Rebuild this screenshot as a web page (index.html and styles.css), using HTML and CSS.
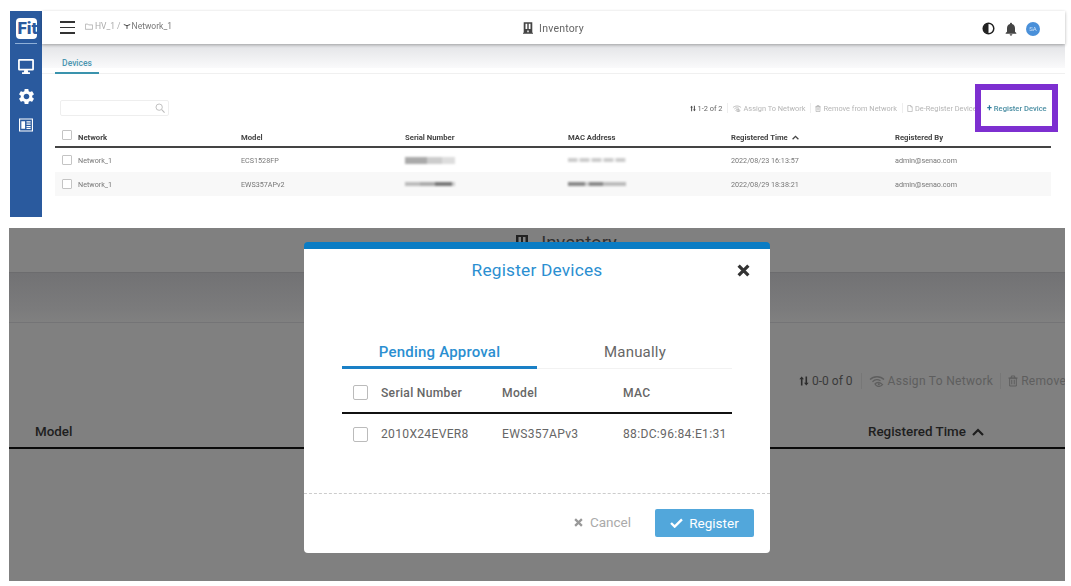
FILE: index.html
```html
<!DOCTYPE html>
<html>
	<head>
		<meta charset="utf-8">
		<title>Inventory</title>
		<link rel="stylesheet" href="styles.css">
	</head>
	<body>
		<svg class="defs" width="0" height="0">
			<symbol id="i-building" viewBox="0 0 14 16"><path fill-rule="evenodd" d="M1 0h12v14.500h1V16H0v-1.500h1zM3.500 2v7.500h2.500V2zM8 2v7.500h2.500V2zM6 11.500v2.500h2v-2.500z"/></symbol>
			<symbol id="i-sort" viewBox="0 0 12 12"><path d="M3.200 .5L6 4H4.200v7.500H2.300V4H.4zM8.800 11.500L6 8h1.800V.5h1.900V8h1.900z"/></symbol>
			<symbol id="i-wifi" viewBox="0 0 16 12"><g fill="none" stroke="currentColor" stroke-width="1.300"><path d="M1 4.500C4.500 .8 11.500 .8 15 4.500"/><path d="M3.500 6.800C5.800 4.500 9 4.300 11.500 5.800"/><path d="M6 9c1.500-2 5-2.200 7.500 .6-2.500 2.600-6 2.400-7.500-.6z"/></g><circle cx="9.800" cy="9.300" r="1" fill="currentColor"/></symbol>
			<symbol id="i-trash" viewBox="0 0 12 14"><path fill="none" stroke="currentColor" stroke-width="1.200" d="M2 3.500h8V13H2zM.5 3.500h11M4 3.500V1h4v2.500M4.500 5.500v5.500M7.500 5.500v5.500"/></symbol>
			<symbol id="i-doc" viewBox="0 0 12 14"><path fill="none" stroke="currentColor" stroke-width="1.200" d="M1.500 1h6l3 3v9h-9zM7.500 1v3h3"/></symbol>
			<symbol id="i-up" viewBox="0 0 12 8"><path fill="none" stroke="currentColor" stroke-width="2.200" d="M1 7l5-5 5 5"/></symbol>
			<symbol id="i-cross" viewBox="0 0 12 12"><path fill="none" stroke="currentColor" stroke-width="3" d="M1.500 1.500l9 9M10.500 1.500l-9 9"/></symbol>
		</svg>

		<!-- inventory page -->
		<section class="page">
			<nav class="side">
				<div class="logo-wrap"><div class="logo">Fit</div></div>
				<svg class="side-icon monitor" viewBox="0 0 18 17"><path fill="#fff" fill-rule="evenodd" d="M1.500 0h15A1.500 1.500 0 0 1 18 1.500v10a1.500 1.500 0 0 1-1.500 1.500H11l.5 2h2v2h-9v-2h2L7 13H1.500A1.500 1.500 0 0 1 0 11.500v-10A1.500 1.500 0 0 1 1.500 0zM2 2v9h14V2z"/></svg>
				<svg class="side-icon gear" viewBox="0 0 24 24"><path fill="#fff" d="M19.140 12.940c.04-.3.06-.61.06-.94 0-.32-.02-.64-.07-.94l2.030-1.580a.49.49 0 0 0 .12-.61l-1.920-3.320a.488.488 0 0 0-.59-.22l-2.390.96c-.5-.38-1.030-.7-1.620-.94l-.36-2.540a.484.484 0 0 0-.48-.41h-3.840c-.24 0-.43.17-.47.41l-.36 2.540c-.59.24-1.130.57-1.620.94l-2.390-.96c-.22-.08-.47 0-.59.22L2.740 8.870c-.12.21-.08.47.12.61l2.030 1.580c-.05.3-.09.63-.09.94s.02.64.07.94l-2.030 1.580a.49.49 0 0 0-.12.61l1.920 3.320c.12.22.37.29.59.22l2.390-.96c.5.38 1.030.7 1.620.94l.36 2.540c.05.24.24.41.48.41h3.840c.24 0 .44-.17.47-.41l.36-2.540c.59-.24 1.130-.56 1.620-.94l2.390.96c.22.08.47 0 .59-.22l1.920-3.320c.12-.22.07-.47-.12-.61l-2.010-1.580zM12 15.600c-1.980 0-3.600-1.620-3.600-3.600s1.620-3.600 3.600-3.600 3.600 1.620 3.600 3.600-1.620 3.600-3.600 3.600z"/></svg>
				<svg class="side-icon news" viewBox="0 0 15 14"><path fill="none" stroke="#fff" stroke-width="1.200" d="M.6 .6h13.800v12.800H.6z"/><path fill="#fff" d="M2.500 3h4v8h-4zM8 3h4.500v1.200H8zM8 5.500h4.500v1.200H8zM8 8h4.500v1.200H8zM8 10h4.500v1.200H8z"/></svg>
			</nav>
			<div class="main">
				<header class="topbar">
					<div class="top-left">
						<div class="burger"><i></i><i></i><i></i></div>
						<div class="crumbs">
							<svg class="crumb-icon" viewBox="0 0 10 8"><path fill="none" stroke="#aaa" d="M.5 1h3l1 1h5v5.500h-9z"/></svg>
							<span>HV_1</span> <span>/</span>
							<svg class="crumb-icon dark" viewBox="0 0 10 8"><path fill="none" stroke="#444" stroke-width="1.200" d="M1 1.500l4 1.500 4-1.500M5 3v4"/></svg><span class="crumb-dark">Network_1</span>
						</div>
					</div>
					<div class="top-title">
						<svg class="title-icon"><use href="#i-building"/></svg>
						<span>Inventory</span>
					</div>
					<div class="top-right">
						<svg class="top-icon" viewBox="0 0 14 14"><circle cx="7" cy="7" r="5.700" fill="#fff" stroke="#222" stroke-width="1.600"/><path fill="#222" d="M7 1.500a5.500 5.500 0 0 0 0 11z"/></svg>
						<svg class="top-icon bell" viewBox="0 0 24 24"><path fill="#444" d="M12 22c1.100 0 2-.9 2-2h-4c0 1.100.89 2 2 2zm6-6v-5c0-3.070-1.640-5.640-4.500-6.320V4c0-.83-.67-1.500-1.500-1.500s-1.500.67-1.500 1.500v.68C7.630 5.360 6 7.920 6 11v5l-2 2v1h16v-1l-2-2z"/></svg>
						<div class="avatar">SA</div>
					</div>
				</header>
				<div class="tabs"><div class="tab">Devices</div></div>
				<div class="content">
					<div class="toolbar">
						<div class="search">
							<svg class="search-icon" viewBox="0 0 12 12"><circle cx="5" cy="5" r="3.800" fill="none" stroke="#bbb" stroke-width="1.100"/><path stroke="#bbb" stroke-width="1.300" d="M8 8l3.500 3.500"/></svg>
						</div>
						<div class="actions">
							<span class="count"><svg class="act-icon"><use href="#i-sort"/></svg>1-2 of 2</span>
							<span class="act"><svg class="act-icon wide"><use href="#i-wifi"/></svg>Assign To Network</span>
							<span class="act"><svg class="act-icon"><use href="#i-trash"/></svg>Remove from Network</span>
							<span class="act act-last"><svg class="act-icon"><use href="#i-doc"/></svg>De-Register Device</span>
							<span class="register">
								<b>+</b> Register Device
								<span class="highlight"></span>
							</span>
						</div>
					</div>
					<div class="row head">
						<div class="cell-check"><span class="check"></span></div>
						<div>Network</div><div>Model</div><div>Serial Number</div><div>MAC Address</div>
						<div class="sorted">Registered Time <svg class="up"><use href="#i-up"/></svg></div>
						<div>Registered By</div>
					</div>
					<div class="row">
						<div class="cell-check"><span class="check"></span></div>
						<div>Network_1</div><div>ECS1528FP</div>
						<div><span class="mask mask-serial"></span></div>
						<div><span class="mask mask-mac"></span></div>
						<div>2022/08/23 16:13:57</div><div>admin@senao.com</div>
					</div>
					<div class="row stripe">
						<div class="cell-check"><span class="check"></span></div>
						<div>Network_1</div><div>EWS357APv2</div>
						<div><span class="mask mask-serial dark"></span></div>
						<div><span class="mask mask-mac dark"></span></div>
						<div>2022/08/29 18:38:21</div><div>admin@senao.com</div>
					</div>
				</div>
			</div>
		</section>

		<!-- same page zoomed in, dialog open -->
		<section class="dimmed">
			<div class="dim-head">
				<svg class="dim-building"><use href="#i-building"/></svg>
				<span>Inventory</span>
			</div>
			<div class="dim-band"></div>
			<div class="dim-tools">
				<span class="dim-count"><svg class="dim-icon"><use href="#i-sort"/></svg>0-0 of 0</span>
				<span class="dim-act"><svg class="dim-icon wide"><use href="#i-wifi"/></svg>Assign To Network</span>
				<span class="dim-act"><svg class="dim-icon"><use href="#i-trash"/></svg>Remove from Network</span>
			</div>
			<div class="dim-table">
				<div>Model</div>
				<div>Registered Time <svg class="dim-up"><use href="#i-up"/></svg></div>
			</div>

			<div class="modal">
				<div class="modal-head">
					<span></span>
					<h2>Register Devices</h2>
					<svg class="close"><use href="#i-cross"/></svg>
				</div>
				<div class="modal-tabs">
					<div class="modal-tab active">Pending Approval</div>
					<div class="modal-tab">Manually</div>
				</div>
				<div class="m-row m-head">
					<span class="m-check"></span><div>Serial Number</div><div>Model</div><div>MAC</div>
				</div>
				<div class="m-row">
					<span class="m-check"></span><div>2010X24EVER8</div><div>EWS357APv3</div><div>88:DC:96:84:E1:31</div>
				</div>
				<div class="modal-foot">
					<span class="cancel"><svg class="cancel-x"><use href="#i-cross"/></svg>Cancel</span>
					<span class="submit">
						<svg class="tick" viewBox="0 0 14 11"><path fill="none" stroke="#fff" stroke-width="2.600" d="M1 5.500l4 4 8-8"/></svg>
						Register
					</span>
				</div>
			</div>
		</section>
	</body>
</html>
```
FILE: styles.css
```css
html {
  box-sizing: border-box;
  font-family: 'Roboto', 'Liberation Sans', sans-serif;
}

*, *:before, *:after {
  box-sizing: inherit;
}

body {
  margin: 0;
  padding: 11px 6px 0 10px;
  background: #fff;
  height: 586px;
  overflow: hidden;
}

.defs {
  position: absolute;
}

/* top part */
.page {
  display: flex;
  height: 206px;
  margin-bottom: 11px;
  filter: blur(.35px);
}

.side {
  width: 32px;
  background: #2a5a9e;
  display: flex;
  flex-direction: column;
  align-items: center;
}

.logo-wrap {
  width: 22px;
  height: 33px;
  padding-top: 7px;
  border-bottom: 1px solid #8fb0d8;
  display: flex;
  justify-content: center;
}

.logo {
  width: 21px;
  height: 21px;
  background: #fff;
  border-radius: 4px;
  color: #2a5a9e;
  font-size: 17px;
  font-weight: 900;
  line-height: 21px;
  padding-left: 2px;
  white-space: nowrap;
  overflow: hidden;
}

.side-icon {
  width: 16px;
  height: 15px;
  margin-top: 15px;
}

.side-icon.gear {
  width: 19px;
  height: 19px;
  margin-top: 13px;
}

.side-icon.news {
  width: 14px;
  height: 14px;
  margin-top: 12px;
}

.main {
  flex: 1;
  min-width: 0;
}

.topbar {
  height: 33px;
  display: grid;
  grid-template-columns: 1fr auto 1fr;
  align-items: center;
  background: #fff;
  box-shadow: 0 1px 3px rgba(0,0,0,.3);
  position: relative;
}

.top-left {
  display: flex;
  align-items: center;
  padding-left: 18px;
}

.burger {
  width: 15px;
  margin-right: 10px;
}

.burger i {
  display: block;
  height: 1.5px;
  background: #333;
  margin-bottom: 4px;
}

.burger i:last-child {
  margin-bottom: 0;
}

.crumbs {
  display: flex;
  align-items: center;
  gap: 2px;
  font-size: 8.500px;
  color: #aaa;
  margin-top: -3px;
}

.crumb-icon {
  width: 8px;
  height: 7px;
}

.crumb-dark {
  color: #777;
  margin-left: -1px;
}

.top-title {
  display: flex;
  align-items: center;
  gap: 6px;
  font-size: 10.500px;
  color: #666;
  letter-spacing: .2px;
  margin-top: 1px;
}

.title-icon {
  width: 10px;
  height: 12px;
  fill: #444;
}

.top-right {
  display: flex;
  justify-content: flex-end;
  align-items: center;
  padding-right: 25px;
  margin-top: 2px;
}

.top-icon {
  width: 13px;
  height: 13px;
  margin-right: 8px;
}

.top-icon.bell {
  width: 16px;
  height: 16px;
  margin-right: 7px;
}

.avatar {
  width: 14px;
  height: 14px;
  border-radius: 50%;
  background: #4a90d9;
  color: #cfe2f6;
  font-size: 6px;
  line-height: 14px;
  text-align: center;
}

.tabs {
  height: 30px;
  background: linear-gradient(#e2e3e6, #fafafb 24px, #fff 24px);
  border-bottom: 1px solid #f0f0f0;
  padding-left: 13px;
}

.tab {
  width: 44px;
  height: 30px;
  border-bottom: 2px solid #3a93ad;
  color: #4a95b0;
  font-size: 8.500px;
  font-weight: 500;
  text-align: center;
  padding-top: 14px;
}

.content {
  padding: 0 14px 0 13px;
}

.toolbar {
  display: flex;
  justify-content: space-between;
  align-items: center;
  height: 53px;
  padding: 15px 4px 0 5px;
}

.search {
  width: 109px;
  height: 16px;
  border: 1px solid #eee;
  border-radius: 2px;
  display: flex;
  justify-content: flex-end;
  align-items: center;
  padding-right: 3px;
}

.search-icon {
  width: 10px;
  height: 10px;
}

.actions {
  display: flex;
  align-items: center;
  font-size: 7.400px;
  color: #b5b5b5;
  white-space: nowrap;
}

.count {
  color: #666;
  display: flex;
  align-items: center;
  gap: 2px;
  padding-right: 4px;
}

.act {
  display: flex;
  align-items: center;
  gap: 2px;
  border-left: 1px solid #eee;
  padding: 0 5px 0 4px;
  height: 10px;
}

.act-last {
  width: 85px;
  overflow: hidden;
}

.act-icon {
  width: 6px;
  height: 7px;
  fill: #444;
  color: #aaa;
}

.act-icon.wide {
  width: 10px;
}

.register {
  position: relative;
  color: #4a8ea3;
  font-weight: 500;
  font-size: 7.600px;
  width: 60px;
}

.register b {
  color: #2a7a9c;
  font-size: 9px;
  line-height: 9px;
}

.highlight {
  position: absolute;
  left: -12px;
  right: -11px;
  top: -20px;
  height: 48px;
  border: 6px solid #7d2fd0;
}

.row {
  display: grid;
  grid-template-columns: 23px 163px 164px 163px 163px 164px 1fr;
  align-items: center;
  height: 24px;
  font-size: 7.200px;
  color: #777;
}

.row.head {
  height: 21px;
  padding-top: 1px;
  border-bottom: 2px solid #444;
  color: #444;
  font-size: 7.700px;
  font-weight: 700;
}

.row.stripe {
  background: #f8f8f8;
}

.cell-check {
  padding-left: 7px;
  display: flex;
}

.check {
  width: 10px;
  height: 10px;
  border: 1px solid #c4c4c4;
  border-radius: 1px;
  background: #fff;
}

.head .check {
  margin-top: -4px;
}

.sorted {
  display: flex;
  align-items: center;
  gap: 4px;
}

.up {
  width: 7px;
  height: 5px;
  color: #444;
}

.mask {
  display: block;
  height: 7px;
  filter: blur(1.200px);
}

.mask-serial {
  width: 50px;
  background: linear-gradient(90deg, #aaa 0 45%, #ccc 45% 75%, #ddd 75%);
}

.mask-mac {
  width: 58px;
  height: 4px;
  background: repeating-linear-gradient(90deg, #ccc 0 9px, #eee 9px 12px);
}

.mask-serial.dark {
  height: 4px;
  background: linear-gradient(90deg, #bbb 0 30%, #aaa 30% 60%, #777 60% 95%, #ccc 95%);
}

.mask-mac.dark {
  background: linear-gradient(90deg, #888 0 30%, #ccc 30% 36%, #888 36% 60%, #bbb 60%);
}

/* bottom part */
.dimmed {
  position: relative;
  height: 353px;
  margin-left: -1px;
  background: #808080;
  overflow: hidden;
}

.dim-head {
  height: 44px;
  display: flex;
  justify-content: center;
  align-items: center;
  gap: 12px;
  color: #303030;
  font-size: 18.500px;
  padding-bottom: 14px;
  padding-left: 58px;
}

.dim-building {
  width: 14px;
  height: 16px;
  fill: #222;
}

.dim-band {
  height: 51px;
  background: linear-gradient(#727274, #7b7b7c 36px, #808080);
  border-top: 1px solid #6c6c6e;
  border-bottom: 1px solid #747476;
}

.dim-tools {
  height: 67px;
  padding: 0 0 1px 790px;
  display: flex;
  align-items: flex-end;
  font-size: 12px;
  color: #5e5e5e;
  white-space: nowrap;
}

.dim-count {
  display: flex;
  align-items: center;
  gap: 3px;
  color: #3a3a3a;
  padding-right: 8px;
  height: 16px;
}

.dim-act {
  display: flex;
  align-items: center;
  gap: 3px;
  border-left: 1px solid #777;
  padding: 0 7px;
  height: 16px;
  letter-spacing: .3px;
}

.dim-icon {
  width: 10px;
  height: 12px;
  fill: #2c2c2c;
  color: #5e5e5e;
}

.dim-icon.wide {
  width: 16px;
}

.dim-table {
  height: 59px;
  padding: 0 0 8px 26px;
  display: grid;
  grid-template-columns: 833px 1fr;
  align-items: end;
  border-bottom: 2px solid #0a0a0a;
  color: #1e1e1e;
  font-size: 13.400px;
  font-weight: 500;
}

.dim-up {
  width: 12px;
  height: 8px;
  margin-left: 3px;
  color: #1e1e1e;
}

.modal {
  position: absolute;
  left: 295px;
  top: 14px;
  width: 466px;
  height: 311px;
  background: #fff;
  border-top: 7px solid #0a7cc4;
  border-radius: 4px;
  display: flex;
  flex-direction: column;
}

.modal-head {
  display: grid;
  grid-template-columns: 1fr auto 1fr;
  align-items: center;
  height: 42px;
  padding: 0 20px;
  flex-shrink: 0;
}

.modal-head h2 {
  margin: 0;
  font-size: 17.300px;
  font-weight: 400;
  color: #2b8fd1;
  letter-spacing: .2px;
}

.close {
  width: 13px;
  height: 13px;
  justify-self: end;
  color: #333;
}

.modal-tabs {
  display: grid;
  grid-template-columns: 195px 196px;
  margin: 44px 38px 0;
  height: 34px;
  border-bottom: 1px solid #f2f2f2;
}

.modal-tab {
  font-size: 15px;
  line-height: 19px;
  padding-top: 8px;
  text-align: center;
  color: #666;
  letter-spacing: .2px;
}

.modal-tab.active {
  color: #2b8fd1;
  font-weight: 500;
  border-bottom: 3px solid #1a80c6;
  height: 34px;
}

.m-row {
  display: grid;
  grid-template-columns: 28px 121px 121px 1fr;
  align-items: center;
  margin: 0 38px;
  padding-left: 11px;
  height: 40px;
  font-size: 12.100px;
  color: #666;
  letter-spacing: .3px;
  white-space: nowrap;
}

.m-row.m-head {
  height: 45px;
  padding-top: 4px;
  border-bottom: 2px solid #111;
  font-weight: 500;
}

.m-check {
  width: 15px;
  height: 15px;
  border: 1px solid #bbb;
  border-radius: 2px;
}

.modal-foot {
  margin-top: auto;
  height: 60px;
  border-top: 1px dashed #ccc;
  display: flex;
  justify-content: flex-end;
  align-items: center;
  padding: 0 16px 1px 0;
  gap: 24px;
}

.cancel {
  display: flex;
  align-items: center;
  gap: 7px;
  color: #aaa;
  font-size: 13.500px;
  margin-top: -2px;
}

.cancel-x {
  width: 9px;
  height: 9px;
  color: #999;
  margin-top: 1px;
}

.submit {
  width: 99px;
  height: 28px;
  background: #52a7db;
  border-radius: 2px;
  color: #fff;
  font-size: 13.500px;
  display: flex;
  justify-content: center;
  align-items: center;
  gap: 6px;
}

.tick {
  width: 13px;
  height: 10px;
}
```
